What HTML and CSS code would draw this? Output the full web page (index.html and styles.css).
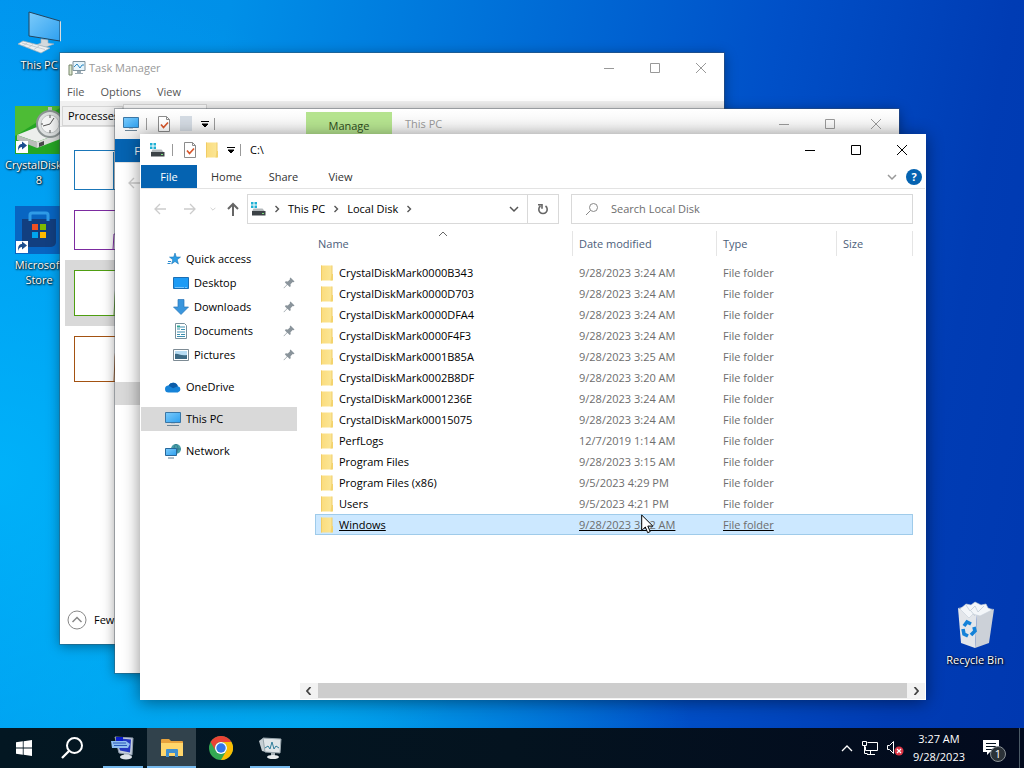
FILE: index.html
```
<!DOCTYPE html>
<html lang="en">
<head>
  <meta charset="UTF-8">
  <meta name="viewport" content="width=device-width, initial-scale=1.0">
  <title>Desktop</title>
  <link rel="stylesheet" href="styles.css">
</head>
<body>
  <!-- Shared icons -->
  <svg class="sprite" aria-hidden="true">
    <defs>
      <linearGradient id="screenFill" x1="0" y1="0" x2="1" y2="1">
        <stop offset="0" stop-color="#7ccbfb"/>
        <stop offset="1" stop-color="#2ea0ef"/>
      </linearGradient>
      <linearGradient id="folderFill" x1="0" y1="0" x2="1" y2="0">
        <stop offset="0" stop-color="#fbdc7c"/>
        <stop offset="1" stop-color="#fbe697"/>
      </linearGradient>
    </defs>
    <symbol id="i-min" viewBox="0 0 10 10"><path d="M0 5.5h10" stroke="currentColor" fill="none"/></symbol>
    <symbol id="i-max" viewBox="0 0 10 10"><path d="M.5.5h9v9h-9z" stroke="currentColor" fill="none"/></symbol>
    <symbol id="i-close" viewBox="0 0 10 10"><path d="M0 0l10 10M10 0L0 10" stroke="currentColor" fill="none"/></symbol>
    <symbol id="i-pc" viewBox="0 0 16 16">
      <path d="M.5 1.5h15v10H.5z" fill="url(#screenFill)" stroke="#3a76a5"/>
      <path d="M2 14.5h12" stroke="#6a8294"/><path d="M6 12h4v1H6z" fill="#b9c8d2"/>
    </symbol>
    <symbol id="i-drive" viewBox="0 0 16 16">
      <path d="M1 1h2.500v2.500H1zM4.500 1H7v2.500H4.500zM1 4.500h2.500V7H1zM4.500 4.500H7V7H4.500z" fill="#1fb0d4"/>
      <path d="M3.500 7.500h9l2.500 3H2z" fill="#b4b9bc"/><path d="M2 10h13.500v4.500H2z" fill="#3c4246"/>
      <path d="M12 12h2v1h-2z" fill="#7be07b"/>
    </symbol>
    <symbol id="i-props" viewBox="0 0 14 16">
      <path d="M1.500.5h8l3 3v12h-11z" fill="#fff" stroke="#8b8b8b"/>
      <path d="M9.500.5v3h3" fill="none" stroke="#8b8b8b"/>
      <path d="M4 8.500l2.500 3 4.500-5" fill="none" stroke="#d8572c" stroke-width="1.700"/>
    </symbol>
    <symbol id="i-folder" viewBox="0 0 14 16">
      <path d="M1 .5h11v15H1z" fill="url(#folderFill)"/>
      <path d="M1.500.5v15M12 .5v9" stroke="#f0cc66"/>
      <path d="M11.500 9h1.500v6.500h-2.500z" fill="#f3d36e"/>
    </symbol>
    <symbol id="i-more" viewBox="0 0 8 8"><path d="M0 1.500h8M1 4h6L4 7z" stroke="currentColor" stroke-width="1" fill="currentColor"/></symbol>
    <symbol id="i-right" viewBox="0 0 6 8"><path d="M1.500 1l3 3-3 3" stroke="#555" stroke-width="1.400" fill="none"/></symbol>
    <symbol id="i-left" viewBox="0 0 6 8"><path d="M4.500 0l-3.500 4 3.500 4" stroke="#444" stroke-width="1.800" fill="none"/></symbol>
    <symbol id="i-down" viewBox="0 0 10 8"><path d="M1 2l4 4 4-4" stroke="currentColor" stroke-width="1.500" fill="none"/></symbol>
    <symbol id="i-back" viewBox="0 0 12 12"><path d="M12 6H1M6 1L1 6l5 5" stroke="currentColor" stroke-width="1.300" fill="none"/></symbol>
    <symbol id="i-pin" viewBox="0 0 12 12">
      <path d="M7.500.5l4 4-1 .7-.8-.2-2.200 2.200.2 2-1 .9-2.300-2.300L1 11.300l-.5-.4 3.400-3.500L1.800 5.200l1-1 2 .2L7 2.200 6.800 1.300z" fill="#8a949b"/>
    </symbol>
  </svg>

  <main class="desktop">
    <div class="shortcuts">
      <a class="shortcut" href="#">
        <svg width="48" height="48" viewBox="0 0 48 48">
          <path d="M14 6l31 9v20l-31-5z" fill="url(#screenFill)" stroke="#23455f"/>
          <path d="M45 15l1 .5v20l-1-.5z" fill="#d8dde0"/>
          <path d="M26 33l7 1v3l6 1-8 3-10-2 5-2z" fill="#d3d9dd" stroke="#a2adb5" stroke-width=".6"/>
          <path d="M8 35l27 7-9 5L3 38z" fill="#eceff1" stroke="#a5b1b9" stroke-width=".7"/>
          <path d="M7 37l23 6.500M12 37l-4 3M18 38.500l-5 3.500M24 40l-5 3.500" stroke="#b4bfc6" stroke-width=".7"/>
        </svg>
        <span>This PC</span>
      </a>
      <a class="shortcut" href="#">
        <svg width="48" height="48" viewBox="0 0 48 48">
          <path d="M0 0h48v48H0z" fill="#25a525"/><path d="M0 0h48L0 30z" fill="#4dbc35"/>
          <path d="M2 29l20-8 26 5-26 10z" fill="#eceeec"/>
          <path d="M2 29l20 7v6L2 34z" fill="#b9bdb9"/><path d="M22 36l26-10v6L22 42z" fill="#dadcda"/>
          <path d="M24 37l5-2v4l-5 2z" fill="#46484a"/>
          <path d="M33 1h4v5h-4z" fill="#b9bdb9"/>
          <circle cx="35" cy="18" r="13" fill="#dde0e0" stroke="#8d9494" stroke-width="2"/>
          <circle cx="35" cy="18" r="9" fill="#f4f5f5" stroke="#c2c6c6"/>
          <path d="M28 20l7-2 4-6M35 9v3M35 24v3M26 18h2" stroke="#555" fill="none"/>
          <path d="M1 35h12v12H1z" fill="#fff"/>
          <path d="M3 45c0-5 1-7 4-7v-2.500l5 4-5 4V41c-2 0-3 1-4 4z" fill="#1c4e8e"/>
        </svg>
        <span>CrystalDiskMark 8</span>
      </a>
      <a class="shortcut" href="#">
        <svg width="48" height="48" viewBox="0 0 48 48">
          <path d="M0 0h48v48H0z" fill="#0865c2"/>
          <path d="M7 13h34v23a5 5 0 0 1-5 5H12a5 5 0 0 1-5-5z" fill="#123f80"/>
          <path d="M15 15V9q0-2 2-2h14q2 0 2 2v6" fill="none" stroke="#2f9be6" stroke-width="3"/>
          <path d="M17 18h6v6h-6z" fill="#f25022"/><path d="M25 18h6v6h-6z" fill="#7fba00"/>
          <path d="M17 26h6v6h-6z" fill="#00a4ef"/><path d="M25 26h6v6h-6z" fill="#ffb900"/>
          <path d="M1 35h12v12H1z" fill="#fff"/>
          <path d="M3 45c0-5 1-7 4-7v-2.500l5 4-5 4V41c-2 0-3 1-4 4z" fill="#1c4e8e"/>
        </svg>
        <span>Microsoft Store</span>
      </a>
    </div>

    <a class="shortcut recycle" href="#">
      <svg width="48" height="48" viewBox="0 0 48 48">
        <path d="M7 7l19 6-2 34-14-5z" fill="#e3e6ea"/>
        <path d="M26 13l17-5-5 34-14 5z" fill="#ccd1d8"/>
        <path d="M7 7l10-2 26 3-17 5z" fill="#aeb9c5"/>
        <path d="M9 8l6-5 5 1 4-3 6 3 5-1 2 4 4 2-12 6-7-2-4 4-5-5z" fill="#f3f6f9" stroke="#c4cfd9" stroke-width=".6"/>
        <path d="M15 4l4 6 5-5 3 6 6-6M20 10l4 5" stroke="#c0ccd6" fill="none" stroke-width=".8"/>
        <g fill="none" stroke="#1482d8" stroke-width="3.600">
          <path d="M13 25l3-4 4 2M23 26l1 4-4 4M12 28l1 5 4 2"/>
        </g>
      </svg>
      <span>Recycle Bin</span>
    </a>

    <!-- Task Manager -->
    <section class="window taskmgr inactive">
      <header class="titlebar">
        <svg class="app-icon" width="18" height="16" viewBox="0 0 18 16">
          <path d="M1 5h3v10H1z" fill="#dbe6cd" stroke="#76856b"/>
          <path d="M5 1.500h12v9H5z" fill="#e6f4fb" stroke="#7f939e"/>
          <path d="M6 7l3-3 3 4 2-3h2" fill="none" stroke="#2b88c2"/>
          <path d="M9 11h4v2h2v1H7v-1h2z" fill="#9babb5"/>
        </svg>
        <h2>Task Manager</h2>
        <div class="controls">
          <button aria-label="Minimize"><svg><use href="#i-min"/></svg></button>
          <button aria-label="Maximize"><svg><use href="#i-max"/></svg></button>
          <button aria-label="Close"><svg><use href="#i-close"/></svg></button>
        </div>
      </header>
      <nav class="menubar">
        <button>File</button>
        <button>Options</button>
        <button>View</button>
      </nav>
      <div class="tabstrip">
        <button>Processes</button>
        <button class="current" aria-label="Performance"></button>
      </div>
      <ul class="graphs">
        <li><svg class="graph cpu" width="60" height="40"><path d="M38.500 39V1"/></svg></li>
        <li><svg class="graph memory" width="60" height="40"><path d="M38 39l1-16h20"/></svg></li>
        <li class="current"><svg class="graph disk" width="60" height="46"><path d="M39 45l1-20 2-23"/></svg></li>
        <li><svg class="graph net" width="60" height="46"><path d="M39 45l1-25 2-18"/></svg></li>
      </ul>
      <footer>
        <button class="fewer">
          <svg width="20" height="20" viewBox="0 0 20 20"><circle cx="10" cy="10" r="9" fill="none" stroke="#888"/><path d="M5.500 12L10 7.500l4.500 4.500" fill="none" stroke="#888" stroke-width="1.500"/></svg>
          Fewer details
        </button>
      </footer>
    </section>

    <!-- Explorer, This PC -->
    <section class="window explorer explorer-back inactive">
      <header class="titlebar">
        <svg class="app-icon" width="16" height="16"><use href="#i-pc"/></svg>
        <div class="quickbar">
          <button aria-label="Properties"><svg width="14" height="16"><use href="#i-props"/></svg></button>
          <button aria-label="New folder"><svg width="14" height="16" viewBox="0 0 14 16"><path d="M1 0h12v15H1z" fill="#d3dae2"/></svg></button>
          <button class="more" aria-label="Customize"><svg width="8" height="8"><use href="#i-more"/></svg></button>
        </div>
        <button class="manage">Manage</button>
        <h2>This PC</h2>
        <div class="controls">
          <button aria-label="Minimize"><svg><use href="#i-min"/></svg></button>
          <button aria-label="Maximize"><svg><use href="#i-max"/></svg></button>
          <button aria-label="Close"><svg><use href="#i-close"/></svg></button>
        </div>
      </header>
      <div class="ribbon">
        <button class="file-tab">File</button>
      </div>
      <div class="toolbar">
        <button class="nav-btn" aria-label="Back"><svg width="12" height="12"><use href="#i-back"/></svg></button>
      </div>
      <div class="rail"></div>
    </section>

    <!-- Explorer, C:\ -->
    <section class="window explorer explorer-front">
      <header class="titlebar">
        <svg class="app-icon" width="16" height="16"><use href="#i-drive"/></svg>
        <div class="quickbar">
          <button aria-label="Properties"><svg width="14" height="16"><use href="#i-props"/></svg></button>
          <button aria-label="New folder"><svg width="14" height="16"><use href="#i-folder"/></svg></button>
          <button class="more" aria-label="Customize"><svg width="8" height="8"><use href="#i-more"/></svg></button>
        </div>
        <h2>C:\</h2>
        <div class="controls">
          <button aria-label="Minimize"><svg><use href="#i-min"/></svg></button>
          <button aria-label="Maximize"><svg><use href="#i-max"/></svg></button>
          <button aria-label="Close"><svg><use href="#i-close"/></svg></button>
        </div>
      </header>

      <div class="ribbon">
        <button class="file-tab">File</button>
        <button>Home</button>
        <button>Share</button>
        <button>View</button>
        <button class="expand" aria-label="Expand the Ribbon"><svg width="10" height="8"><use href="#i-down"/></svg></button>
        <button class="help" aria-label="Help">?</button>
      </div>

      <div class="toolbar">
        <button class="nav-btn" aria-label="Back"><svg width="12" height="12"><use href="#i-back"/></svg></button>
        <button class="nav-btn" aria-label="Forward"><svg class="flip" width="12" height="12"><use href="#i-back"/></svg></button>
        <button class="nav-btn recent" aria-label="Recent locations"><svg width="6" height="6"><use href="#i-down"/></svg></button>
        <button class="nav-btn up" aria-label="Up"><svg width="14" height="14" viewBox="0 0 14 14"><path d="M7 14V2M2 7l5-5 5 5" stroke="#666" stroke-width="2" fill="none"/></svg></button>
        <div class="address">
          <svg width="16" height="16"><use href="#i-drive"/></svg>
          <svg width="6" height="8"><use href="#i-right"/></svg>
          <a href="#">This PC</a>
          <svg width="6" height="8"><use href="#i-right"/></svg>
          <a href="#">Local Disk</a>
          <svg width="6" height="8"><use href="#i-right"/></svg>
          <button class="history" aria-label="Previous locations"><svg width="10" height="8"><use href="#i-down"/></svg></button>
          <button class="refresh" aria-label="Refresh"><svg width="12" height="12" viewBox="0 0 12 12"><path d="M8.500 3a4.200 4.200 0 1 1-5 0M1 1.800h4v4" fill="none" stroke="#666" stroke-width="1.600"/></svg></button>
        </div>
        <label class="search">
          <svg width="14" height="14" viewBox="0 0 14 14"><circle cx="8.500" cy="5.500" r="4" fill="none" stroke="#888"/><path d="M5.500 8.500L1 13" stroke="#888"/></svg>
          <input type="text" placeholder="Search Local Disk" aria-label="Search Local Disk">
        </label>
      </div>

      <div class="content">
        <nav class="tree">
          <a href="#">
            <svg width="16" height="16" viewBox="0 0 16 16"><path d="M10 2l1.300 4 4.200.1-3.300 2.600 1.200 4.200-3.400-2.400-3.400 2.400 1.200-4.200-3.300-2.600 4.200-.1z" fill="#2e9de4" stroke="#1b77b8" stroke-width=".6"/><path d="M3 10.500h3M2.500 12.500h3" stroke="#2b8bcf"/></svg>
            Quick access
          </a>
          <a class="sub" href="#">
            <svg width="16" height="16" viewBox="0 0 16 16"><path d="M.5 2.500h15v11H.5z" fill="#1d9bf5" stroke="#1b6eb4"/><path d="M2 12.500h9M12 12.500h2" stroke="#b5e0ff" stroke-width=".6"/></svg>
            Desktop
            <svg class="pin" width="12" height="12"><use href="#i-pin"/></svg>
          </a>
          <a class="sub" href="#">
            <svg width="16" height="16" viewBox="0 0 16 16"><path d="M5 .5h6V8h4.500L8 15.500.5 8H5z" fill="#3a96dd" stroke="#2a76b8" stroke-width=".7"/></svg>
            Downloads
            <svg class="pin" width="12" height="12"><use href="#i-pin"/></svg>
          </a>
          <a class="sub" href="#">
            <svg width="16" height="16" viewBox="0 0 16 16"><path d="M2.500.5h9l2 2v13h-11z" fill="#fff" stroke="#78909c"/><path d="M7 4h5M4 6h3M8 6.500h4M4 9h8M4 11.500h3M8 11.500h4M4 13.500h8" stroke="#3c8fb0"/><path d="M4 2.500h3v2H4z" fill="#2fa595"/></svg>
            Documents
            <svg class="pin" width="12" height="12"><use href="#i-pin"/></svg>
          </a>
          <a class="sub" href="#">
            <svg width="16" height="16" viewBox="0 0 16 16"><path d="M.5 2.500h15v11H.5z" fill="#fff" stroke="#7d8b94"/><path d="M2 4h12v8H2z" fill="#b7dcf3"/><path d="M2 7c3-1 5 2 12 1v4H2z" fill="#3d6a84"/></svg>
            Pictures
            <svg class="pin" width="12" height="12"><use href="#i-pin"/></svg>
          </a>
          <a class="root" href="#">
            <svg width="16" height="16" viewBox="0 0 16 16"><path d="M3.500 13.500a3.500 3.500 0 0 1 0-7 5 5 0 0 1 9.300.7 3.200 3.200 0 0 1 0 6.300z" fill="#1683d8"/><path d="M3.500 6.500a5 5 0 0 1 9.300.7l-4.800 2z" fill="#0c5ca8"/></svg>
            OneDrive
          </a>
          <a class="root current" href="#">
            <svg width="16" height="16"><use href="#i-pc"/></svg>
            This PC
          </a>
          <a class="root" href="#">
            <svg width="16" height="16" viewBox="0 0 16 16"><circle cx="11" cy="6" r="5" fill="#4a9fa8"/><path d="M11 1c-3 3-2 7 0 10M11 1c3 3 2 7 0 10M6 6h10" stroke="#2a7184" fill="none" stroke-width=".7"/><path d="M.5 5.500h11v7H.5z" fill="url(#screenFill)" stroke="#27679a"/><path d="M3 15h6" stroke="#5d7d92"/></svg>
            Network
          </a>
        </nav>

        <div class="files">
          <table>
            <thead>
              <tr>
                <th class="name"><span>Name</span><svg class="sort" width="10" height="6" viewBox="0 0 10 6"><path d="M1 5l4-4 4 4" fill="none" stroke="#666"/></svg></th>
                <th class="date"><span>Date modified</span></th>
                <th class="type"><span>Type</span></th>
                <th class="size"><span>Size</span></th>
              </tr>
            </thead>
            <tbody>
              <tr><td><svg width="14" height="16"><use href="#i-folder"/></svg>CrystalDiskMark0000B343</td><td>9/28/2023 3:24 AM</td><td>File folder</td><td></td></tr>
              <tr><td><svg width="14" height="16"><use href="#i-folder"/></svg>CrystalDiskMark0000D703</td><td>9/28/2023 3:24 AM</td><td>File folder</td><td></td></tr>
              <tr><td><svg width="14" height="16"><use href="#i-folder"/></svg>CrystalDiskMark0000DFA4</td><td>9/28/2023 3:24 AM</td><td>File folder</td><td></td></tr>
              <tr><td><svg width="14" height="16"><use href="#i-folder"/></svg>CrystalDiskMark0000F4F3</td><td>9/28/2023 3:24 AM</td><td>File folder</td><td></td></tr>
              <tr><td><svg width="14" height="16"><use href="#i-folder"/></svg>CrystalDiskMark0001B85A</td><td>9/28/2023 3:25 AM</td><td>File folder</td><td></td></tr>
              <tr><td><svg width="14" height="16"><use href="#i-folder"/></svg>CrystalDiskMark0002B8DF</td><td>9/28/2023 3:20 AM</td><td>File folder</td><td></td></tr>
              <tr><td><svg width="14" height="16"><use href="#i-folder"/></svg>CrystalDiskMark0001236E</td><td>9/28/2023 3:24 AM</td><td>File folder</td><td></td></tr>
              <tr><td><svg width="14" height="16"><use href="#i-folder"/></svg>CrystalDiskMark00015075</td><td>9/28/2023 3:24 AM</td><td>File folder</td><td></td></tr>
              <tr><td><svg width="14" height="16"><use href="#i-folder"/></svg>PerfLogs</td><td>12/7/2019 1:14 AM</td><td>File folder</td><td></td></tr>
              <tr><td><svg width="14" height="16"><use href="#i-folder"/></svg>Program Files</td><td>9/28/2023 3:15 AM</td><td>File folder</td><td></td></tr>
              <tr><td><svg width="14" height="16"><use href="#i-folder"/></svg>Program Files (x86)</td><td>9/5/2023 4:29 PM</td><td>File folder</td><td></td></tr>
              <tr><td><svg width="14" height="16"><use href="#i-folder"/></svg>Users</td><td>9/5/2023 4:21 PM</td><td>File folder</td><td></td></tr>
              <tr class="selected"><td><svg width="14" height="16"><use href="#i-folder"/></svg>Windows</td><td>9/28/2023 3:22 AM</td><td>File folder</td><td></td></tr>
            </tbody>
          </table>
          <div class="scrollbar">
            <button aria-label="Scroll left"><svg width="6" height="8"><use href="#i-left"/></svg></button>
            <div class="thumb"></div>
            <button aria-label="Scroll right"><svg class="flip" width="6" height="8"><use href="#i-left"/></svg></button>
          </div>
        </div>
      </div>
    </section>

    <svg class="cursor" width="13" height="20" viewBox="0 0 13 20">
      <path d="M.7 1v15.500l3.600-3.500 2.400 5.700 2.500-1.100-2.400-5.500h5z" fill="#fff" stroke="#000"/>
    </svg>
  </main>

  <footer class="taskbar">
    <button class="task system" aria-label="Start">
      <svg width="16" height="16" viewBox="0 0 16 16"><path d="M0 2.300l6.800-1v6.300H0zM7.600 1.200L16 0v7.600H7.600zM0 8.400h6.800v6.300L0 13.700zM7.600 8.400H16V16l-8.400-1.200z" fill="#fff"/></svg>
    </button>
    <button class="task system" aria-label="Search">
      <svg width="22" height="22" viewBox="0 0 22 22"><circle cx="13.500" cy="8.500" r="7.500" fill="none" stroke="#fff" stroke-width="2"/><path d="M8 14l-7 7" stroke="#fff" stroke-width="2.300"/></svg>
    </button>
    <div class="apps">
      <button class="task running" aria-label="Remote session">
        <svg width="24" height="24" viewBox="0 0 24 24"><path d="M4 1l18 1-1 17-13-2z" fill="#c4cedb" stroke="#8d9aac"/><path d="M5 2l15 1.500-1 13-10-2z" fill="#2438c0"/><path d="M5 1h7v4H5z" fill="#0c1cc8"/><path d="M0 5h15l4 3-2 4H1z" fill="#8fbdf0"/><path d="M2 7h13M3 9.500h13" stroke="#2a58b8"/><path d="M13 17h5v3h-5z" fill="#a8b4c1"/><ellipse cx="15" cy="21" rx="6" ry="2.500" fill="#dce2e9"/></svg>
      </button>
      <button class="task running active" aria-label="File Explorer">
        <svg width="22" height="18" viewBox="0 0 22 18"><path d="M0 1q0-1 1-1h7l2 2h11q1 0 1 1v14H0z" fill="#e8a33d"/><path d="M0 4h22v13H0z" fill="#ffd66b"/><path d="M5 18v-7q0-1 1-1h10q1 0 1 1v7h-3v-4H8v4z" fill="#3f8fd0"/></svg>
      </button>
      <button class="task" aria-label="Chrome">
        <svg width="24" height="24" viewBox="0 0 24 24"><circle cx="12" cy="12" r="12" fill="#34a853"/><path d="M1.600 6A12 12 0 0 1 22.400 6H12a6 6 0 0 0-5.200 9z" fill="#ea4335"/><path d="M22.400 6A12 12 0 0 1 12 24l5.200-9A6 6 0 0 0 12 6z" fill="#fbbc04"/><circle cx="12" cy="12" r="6" fill="#fff"/><circle cx="12" cy="12" r="4.700" fill="#3377e8"/></svg>
      </button>
      <button class="task running" aria-label="Task Manager">
        <svg width="24" height="24" viewBox="0 0 24 24"><path d="M1 5l4-3 3 2v12l-4-1z" fill="#c6cfd4"/><path d="M5 2l18 1-1 14-15-1z" fill="#dfe5e8" stroke="#98a5ac"/><path d="M7 12l3-2 2 3 2-7 2 7 2-3 3 2" fill="none" stroke="#2f7d9b"/><path d="M13 17h4v3h-4z" fill="#a7b2b8"/><ellipse cx="15" cy="21" rx="6" ry="2" fill="#e7ebed"/></svg>
      </button>
    </div>

    <div class="tray">
      <button aria-label="Show hidden icons"><svg width="12" height="8" viewBox="0 0 12 8"><path d="M1 7l5-5 5 5" fill="none" stroke="#fff" stroke-width="1.300"/></svg></button>
      <button aria-label="Network"><svg width="16" height="14" viewBox="0 0 16 14"><path d="M5.500 1.500h10v8H3.500v-4M.5.500h4v4h-4zM8.500 10v3M5 13.500h8M2.500 4.500v8h3" fill="none" stroke="#fff"/></svg></button>
      <button aria-label="Volume muted"><svg width="17" height="16" viewBox="0 0 17 16"><path d="M.5 5.500h2l4-4v12l-4-4h-2z" fill="none" stroke="#fff"/><circle cx="12" cy="11" r="4.500" fill="#dc3545"/><path d="M10 9l4 4M14 9l-4 4" stroke="#fff" stroke-width="1.200"/></svg></button>
      <button class="clock"><span>3:27 AM</span><span>9/28/2023</span></button>
      <button class="notice" aria-label="Notifications">
        <svg width="16" height="16" viewBox="0 0 16 16"><path d="M0 0h16v12H7l-3 3v-3H0z" fill="#fff"/><path d="M3 3.500h10M3 6.500h10M3 9.500h7" stroke="#03111f"/></svg>
        <span class="badge">1</span>
      </button>
    </div>
  </footer>
</body>
</html>
```
FILE: styles.css
```
* {
  box-sizing: border-box;
}

html, body {
  margin: 0;
  padding: 0;
  height: 100%;
}

body {
  display: flex;
  flex-direction: column;
  overflow: hidden;
  font-family: "Open Sans", "Noto Sans", sans-serif;
  font-size: 11px;
  line-height: 16px;
  color: #000;
}

button {
  margin: 0;
  padding: 0;
  border: none;
  background: none;
  font: inherit;
  color: inherit;
}

a {
  color: inherit;
  text-decoration: none;
}

svg {
  flex: none;
}

.sprite {
  position: absolute;
  width: 0;
  height: 0;
}

.flip {
  transform: scaleX(-1);
}

/* Desktop */
.desktop {
  position: relative;
  flex: 1;
  overflow: hidden;
  background:
    radial-gradient(circle at 0% 65%, rgba(0, 190, 255, 0.7), transparent 45%),
    radial-gradient(ellipse at 30% 105%, rgba(0, 175, 240, 0.8), transparent 38%),
    linear-gradient(100deg, #0094ee 0%, #0090e8 20%, #0070d8 44%, #0050c8 68%, #003cb4 88%, #0038b0 100%);
}

.shortcuts {
  display: grid;
  grid-auto-rows: 100px;
  width: 68px;
  margin: 6px 5px;
}

.shortcut {
  display: flex;
  flex-direction: column;
  align-items: center;
  gap: 3px;
  width: 68px;
  line-height: 15px;
  color: #fff;
  text-align: center;
  text-shadow: 1px 1px 2px #000, 0 0 2px #000;
}

.shortcut span {
  width: 100%;
}

.recycle {
  position: absolute;
  right: 15px;
  bottom: 61px;
}

/* Windows */
.window {
  position: absolute;
  display: flex;
  flex-direction: column;
  background: #fff;
  overflow: hidden;
  box-shadow: 0 0 0 1px rgba(70, 80, 90, 0.4), 0 2px 12px rgba(0, 0, 0, 0.4);
}

.taskmgr {
  inset: 53px 300px 84px 60px;
}

.explorer-back {
  inset: 109px 125px 55px 115px;
}

.explorer-front {
  inset: 134px 98px 28px 140px;
  border: 1px solid #fff;
  box-shadow: 0 2px 16px rgba(0, 0, 0, 0.45);
}

.titlebar {
  display: flex;
  align-items: center;
  height: 30px;
  flex: none;
}

.titlebar h2 {
  margin: 0;
  font-size: 11px;
  font-weight: normal;
}

.inactive .titlebar h2,
.inactive .controls {
  color: #999;
}

.app-icon {
  margin-left: 8px;
}

.controls {
  display: flex;
  height: 100%;
  margin-left: auto;
}

.controls button {
  display: grid;
  place-items: center;
  width: 46px;
}

.controls svg {
  width: 10px;
  height: 10px;
}

/* Task Manager */
.taskmgr .titlebar {
  gap: 3px;
}

.menubar {
  display: flex;
  gap: 16px;
  height: 18px;
  padding: 0 7px;
  color: #555;
}

.tabstrip {
  display: flex;
  align-items: flex-end;
  height: 26px;
  padding-left: 2px;
  background: #f0f0f0;
  border-bottom: 1px solid #ddd;
}

.tabstrip button {
  width: 61px;
  height: 20px;
  padding-left: 5px;
  text-align: left;
  border: 1px solid #d5d5d5;
}

.tabstrip .current {
  width: 84px;
  height: 22px;
  background: #fff;
}

.graphs {
  flex: 1;
  width: 200px;
  margin: 0;
  padding: 13px 5px;
  list-style: none;
}

.graphs li {
  display: flex;
  padding: 10px 9px;
}

.graphs .current {
  background: #d9d9d9;
}

.graph {
  background: #fff;
  border: 1px solid;
  fill: none;
  stroke: currentColor;
}

.cpu {
  color: #1a76b8;
}

.memory {
  color: #7c2ba0;
}

.disk {
  color: #4f9e12;
}

.net {
  color: #a35212;
}

.taskmgr footer {
  padding: 0 7px 14px;
}

.fewer {
  display: flex;
  align-items: center;
  gap: 7px;
}

/* Explorer */
.quickbar {
  display: flex;
  align-items: center;
  gap: 8px;
  margin: 0 9px 0 7px;
  padding: 0 6px 0 11px;
  background:
    linear-gradient(#999, #999) left center / 1px 12px no-repeat,
    linear-gradient(#999, #999) right center / 1px 12px no-repeat;
}

.quickbar button {
  display: flex;
}

.explorer-back .titlebar {
  background: linear-gradient(#fff, #eee);
}

.manage {
  align-self: flex-end;
  width: 86px;
  height: 27px;
  margin: 0 13px 0 82px;
  background: #b5e38f;
  color: #2c4a1c;
}

.ribbon {
  display: flex;
  align-items: center;
  height: 24px;
  flex: none;
  border-bottom: 1px solid #e3e3e3;
  color: #333;
}

.ribbon button {
  width: 57px;
}

.ribbon .file-tab {
  width: 56px;
  height: 23px;
  margin-right: 1px;
  background: #0563b1;
  color: #fff;
}

.ribbon .expand {
  width: 10px;
  margin-left: auto;
  color: #999;
}

.ribbon .help {
  width: 16px;
  height: 16px;
  margin: 0 3px 0 9px;
  border-radius: 50%;
  background: #0563b1;
  color: #fff;
  font-weight: bold;
  line-height: 16px;
}

.toolbar {
  display: flex;
  align-items: center;
  flex: none;
  height: 40px;
  padding: 0 12px 0 13px;
}

.nav-btn {
  display: flex;
  margin-right: 18px;
  color: #ccc;
}

.nav-btn.recent {
  margin-right: 10px;
}

.nav-btn:nth-child(2) {
  margin-right: 14px;
}

.nav-btn.up {
  margin-right: 7px;
}

.address {
  display: flex;
  align-items: center;
  gap: 8px;
  flex: 1 1 312px;
  height: 30px;
  padding-left: 2px;
  border: 1px solid #d9d9d9;
}

.history {
  display: flex;
  margin-left: auto;
  color: #555;
}

.refresh {
  display: grid;
  place-items: center;
  width: 31px;
  height: 28px;
  border-left: 1px solid #d9d9d9;
}

.search {
  display: flex;
  align-items: center;
  gap: 12px;
  flex: 1 1 342px;
  height: 30px;
  margin-left: 12px;
  padding: 0 13px;
  border: 1px solid #d9d9d9;
}

.search input {
  flex: 1;
  min-width: 0;
  padding: 0;
  border: none;
  outline: none;
  font: inherit;
}

.search input::placeholder {
  color: #6d6d6d;
  opacity: 1;
}

.content {
  display: flex;
  flex: 1;
  min-height: 0;
}

.tree {
  width: 159px;
  padding: 18px 3px 0 0;
}

.tree a {
  display: flex;
  align-items: center;
  gap: 5px;
  height: 24px;
  padding-left: 24px;
}

.tree .sub {
  padding: 0 2px 0 32px;
}

.tree .root {
  margin-top: 8px;
}

.tree .current {
  background: #d9d9d9;
}

.pin {
  margin-left: auto;
}

.rail {
  height: 23px;
  margin-top: 179px;
  background: #d9d9d9;
}

.files {
  display: flex;
  flex-direction: column;
  justify-content: space-between;
  flex: 1;
}

table {
  width: calc(100% - 27px);
  margin-left: 15px;
  table-layout: fixed;
  border-collapse: collapse;
}

th {
  position: relative;
  height: 33px;
  padding: 2px 0 6px;
  font-weight: normal;
  text-align: left;
  color: #4c607a;
}

th span {
  display: block;
  height: 25px;
  line-height: 25px;
  padding-left: 6px;
  border-right: 1px solid #e5e5e5;
}

th.name span {
  padding-left: 3px;
}

th.date {
  width: 144px;
}

th.type {
  width: 120px;
}

th.size {
  width: 76px;
}

.sort {
  position: absolute;
  top: 2px;
  left: calc(50% - 6px);
}

td {
  height: 21px;
  padding: 0 6px;
  color: #6d6d6d;
}

td:first-child {
  display: flex;
  align-items: center;
  gap: 5px;
  padding: 0 5px;
  color: #000;
}

.selected {
  background: #cce8ff;
  outline: 1px solid #9fcbea;
  outline-offset: -1px;
  text-decoration: underline;
}

.scrollbar {
  display: flex;
  height: 16px;
  padding-bottom: 1px;
  background: #f2f2f2;
}

.scrollbar button {
  display: grid;
  place-items: center;
  width: 18px;
}

.scrollbar .thumb {
  flex: 1;
  background: #cdcdcd;
}

.cursor {
  position: absolute;
  left: 641px;
  top: 514px;
}

/* Taskbar */
.taskbar {
  display: flex;
  height: 40px;
  flex: none;
  background: linear-gradient(90deg, #031722, #04131f 50%, #020a1e);
  color: #fff;
}

.task {
  display: grid;
  place-items: center;
  width: 49px;
}

.system {
  width: 48px;
}

.apps {
  display: flex;
  margin-left: 2px;
}

.running {
  background: linear-gradient(#76b9ed, #76b9ed) center bottom / 40px 2px no-repeat;
}

.active {
  background: linear-gradient(#76b9ed, #76b9ed) center bottom / 100% 2px no-repeat #31424c;
}

.tray {
  display: flex;
  align-items: center;
  gap: 9px;
  margin-left: auto;
  margin-right: 4px;
  padding-right: 20px;
  border-right: 1px solid #4b5a66;
}

.tray button {
  display: flex;
}

.tray .clock {
  flex-direction: column;
  align-items: center;
  line-height: 18px;
}

.tray .notice {
  position: relative;
  margin-left: 9px;
}

.badge {
  position: absolute;
  left: 7px;
  top: 6px;
  width: 16px;
  height: 16px;
  border: 1px solid #8a9196;
  border-radius: 50%;
  background: #2b3238;
  line-height: 14px;
  text-align: center;
}
```
